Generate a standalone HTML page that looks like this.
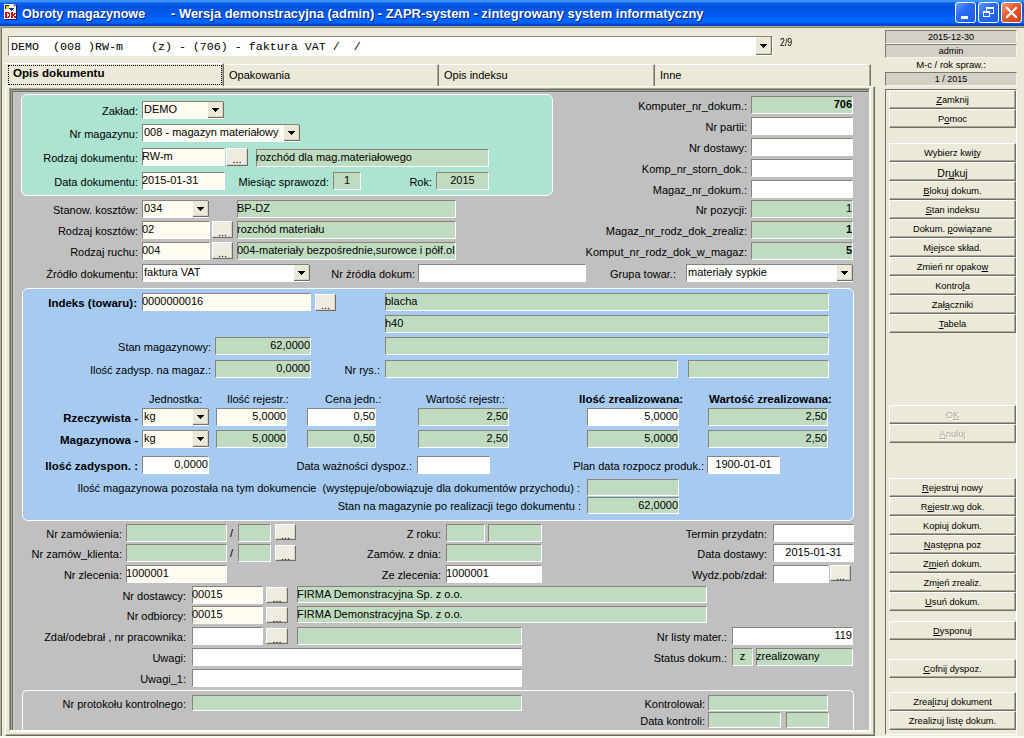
<!DOCTYPE html>
<html><head><meta charset="utf-8"><style>
html,body{margin:0;padding:0;width:1024px;height:738px;overflow:hidden;background:#ece9d8;position:relative;font-family:"Liberation Sans",sans-serif;font-size:11px;color:#000}
div,span,i{position:absolute;box-sizing:border-box}
#title{left:0;top:0;width:1024px;height:26px;background:linear-gradient(to bottom,#3d95ff 0px,#3a92fe 1.5px,#1a72f2 2.5px,#0a5ce8 3.5px,#0a5ce8 5px,#0052dc 6px,#0055e5 8px,#0057e8 13px,#0063fa 18px,#0066ff 21px,#0063fa 23px,#0046d2 24px,#0040c6 26px)}
.ttext{top:6px;height:16px;line-height:16px;color:#fff;font-weight:bold;font-size:13px;white-space:pre;text-shadow:1px 1px 0 #0a1f80}
#ticon{left:4px;top:4px;width:13px;height:16px}
#ticon .doc{left:0;top:0;width:12px;height:15px;background:#fff;box-shadow:1px 1px 0 #00207a}
#ticon .dk{left:0;top:5px;width:13px;height:10px;font-size:9px;line-height:10px;font-weight:bold;color:#d01010;text-align:center}
#ticon .ic1{left:1px;top:1px;width:4px;height:4px;background:#e8d020;border-left:1px solid #333;border-top:1px solid #333}
#ticon .ic2{left:5px;top:3px;width:4px;height:3px;background:#1040c0}
.tbtn{top:2px;width:21px;height:21px;border:1px solid #fff;border-radius:3px;background:linear-gradient(135deg,#6a9dff 0%,#2a6cf6 40%,#1d5be6 100%)}
.tbtn.cl{background:linear-gradient(135deg,#f59a7a 0%,#e5582e 45%,#d43d12 100%)}
.tbtn .mn{left:5px;top:13px;width:7px;height:3px;background:#fff}
.tbtn .rs1{left:7px;top:4px;width:8px;height:7px;border:1px solid #fff;border-top-width:2px}
.tbtn .rs2{left:4px;top:8px;width:7px;height:6px;border:1px solid #fff;border-top-width:2px;background:#2a6cf6}
.tbtn svg{position:absolute;left:-1px;top:-1px}
#wframe{left:0;top:26px;width:1024px;height:712px;border-top:1px solid #b4a98c;border-left:1px solid #b4b09c;box-shadow:inset 0 1px 0 #8a8676,inset 1px 0 0 #6e6c5c,inset 2px 0 0 #f2eee0}
.f{border-style:solid;border-width:1px;border-color:#8c8378 #fff #fff #8c8378;white-space:pre}
.ft{left:-1px;right:-1px;top:-1px;height:16px;line-height:16px;overflow:hidden}
.mono{left:2px;top:1px;height:19px;line-height:19px;font-family:"Liberation Mono",monospace;font-size:11.67px;white-space:pre}
.b{background:#efebe1;border-style:solid;border-width:1px;border-color:#fff #716f64 #716f64 #fff;box-shadow:inset -1px -1px 0 #d6d2c4;text-align:center}
.bt{left:0;right:0;top:3px;bottom:0;line-height:15px;white-space:pre}
.ar{left:50%;top:50%;margin-left:-4px;margin-top:-2px;width:0;height:0;border-left:4px solid transparent;border-right:4px solid transparent;border-top:4px solid #000}
.rb{background:#ece9d8;border-style:solid;border-width:1px;border-color:#fff #716f64 #716f64 #fff;box-shadow:inset -1px -1px 0 #aca899;text-align:center}
.rb .bt{line-height:17px;font-size:9.3px;top:1px}
.rb.dis{color:#aca899;text-shadow:1px 1px 0 #fff}
.l{text-align:right;white-space:pre}
.t{white-space:pre}
.p{border:1px solid #fff}
.sk{background:#d4d0c8;border-style:solid;border-width:1px;border-color:#7d7a6c #f6f4ea #f6f4ea #7d7a6c;text-align:center;line-height:12px}
#tabs{left:0;top:62px;width:880px;height:26px}
.tab{top:64px;height:23px;border-top:1px solid #fff;border-right:1px solid #716f64;box-shadow:inset -1px 0 0 #aca899;line-height:20px;padding-left:5px;white-space:pre}
.tab.act{top:63px;height:24px;font-size:11.6px;padding-left:8px;line-height:17px}
.tab .focus{left:3px;top:1px;right:1px;bottom:2px;border:1px dotted #000}
.tab b{position:static}
#page{left:5px;top:86px;width:870px;height:650px;border-style:solid;border-width:1px 1px 1px 1px;border-color:#fdfdf4 #6e6a5e #6e6a5e #fdfdf4;box-shadow:inset -1px -1px 0 #a8a494}
#form{left:9px;top:88px;width:862px;height:644px;background:#c0c0c0;border-style:solid;border-width:1px 2px 2px 1px;border-color:#a8a898 #fdfef4 #fdfef4 #a8a898;box-shadow:inset 1px 1px 0 #6c6c5c,inset 2px 2px 0 #a8a898,inset 3px 3px 0 #6a6a62,inset 4px 4px 0 #c8c8c4}
#bpanel{left:885px;top:89px;width:132px;height:646px;border-style:solid;border-width:1px;border-color:#716f64 #fff #fff #716f64}
u{text-decoration:underline}
.cb{background:#ece9d8;border-right:1px solid #716f64;border-bottom:1px solid #716f64;box-shadow:inset -1px -1px 0 #d8d4c4}
.cb svg.arr{position:absolute;left:50%;top:50%;margin-left:-4px;margin-top:-2px}
.skt{left:0;right:0;top:0px;line-height:13px;font-size:9px;text-align:center}
.rb.big .bt{font-size:10.5px;top:1.5px}
#wbot{left:0;top:736px;width:1024px;height:2px;background:#fafaf2}

</style></head><body>
<div id="title"></div>
<svg width="16" height="20" viewBox="0 0 16 20" style="position:absolute;left:3px;top:3px" shape-rendering="crispEdges"><rect x="1" y="1" width="12" height="15" fill="#fff"/><rect x="13" y="2" width="1" height="15" fill="#10206a"/><rect x="2" y="16" width="12" height="1" fill="#10206a"/><rect x="10" y="1" width="3" height="1" fill="#6a8ad0"/><rect x="11" y="2" width="2" height="1" fill="#6a8ad0"/><rect x="12" y="3" width="1" height="1" fill="#6a8ad0"/><rect x="10" y="1" width="1" height="3" fill="#c8c8d0"/><rect x="10" y="3" width="3" height="1" fill="#c8c8d0"/><rect x="2" y="2" width="4" height="4" fill="#222"/><rect x="3" y="3" width="3" height="3" fill="#f0d020"/><rect x="6" y="5" width="5" height="1" fill="#1030c0"/><rect x="7" y="6" width="3" height="1" fill="#1030c0"/><rect x="8" y="7" width="1" height="1" fill="#1030c0"/><rect x="2" y="9" width="4" height="1" fill="#cc1010"/><rect x="2" y="10" width="2" height="5" fill="#cc1010"/><rect x="2" y="14" width="4" height="1" fill="#cc1010"/><rect x="5" y="10" width="2" height="1" fill="#cc1010"/><rect x="6" y="11" width="1" height="3" fill="#cc1010"/><rect x="5" y="13" width="1" height="1" fill="#cc1010"/><rect x="8" y="9" width="2" height="6" fill="#cc1010"/><rect x="11" y="10" width="2" height="1" fill="#cc1010"/><rect x="10" y="11" width="2" height="1" fill="#cc1010"/><rect x="10" y="12" width="1" height="1" fill="#cc1010"/><rect x="11" y="13" width="1" height="1" fill="#cc1010"/><rect x="11" y="14" width="2" height="1" fill="#cc1010"/><rect x="12" y="13" width="1" height="1" fill="#cc1010"/></svg>
<div class="ttext" style="left:22px;font-size:12.6px">Obroty magazynowe</div>
<div class="ttext" style="left:171px;font-size:12.95px">- Wersja demonstracyjna (admin) - ZAPR-system - zintegrowany system informatyczny</div>
<div class="tbtn" style="left:955px"><i class="mn"></i></div>
<div class="tbtn" style="left:978px"><i class="rs1"></i><i class="rs2"></i></div>
<div class="tbtn cl" style="left:1001px"><svg width="21" height="21" viewBox="0 0 21 21"><path d="M6 6 L15 15 M15 6 L6 15" stroke="#fff" stroke-width="2.2" stroke-linecap="square"/></svg></div>
<div id="wframe"></div>
<div class="f" style="left:8px;top:36px;width:765px;height:20px;background:#fff"><span class="mono">DEMO  (008 )RW-m    (z) - (706) - faktura VAT /  /</span></div>
<div class="cb" style="left:756px;top:37px;width:16px;height:18px"><svg class="arr" width="7" height="4" viewBox="0 0 7 4"><path d="M0 0h7v1h-1v1h-1v1h-1v1h-1v-1h-1v-1h-1v-1h-1z" fill="#000"/></svg></div>
<div class="t" style="left:780px;top:36px;height:14px;line-height:14px;font-size:10px;transform:scaleX(.88);transform-origin:0 0">2/9</div>
<div id="tabs"></div>
<div class="tab act" style="left:5px;width:219px"><span class="focus"></span><b>Opis dokumentu</b></div>
<div class="tab" style="left:224px;width:215px">Opakowania</div>
<div class="tab" style="left:439px;width:216px">Opis indeksu</div>
<div class="tab" style="left:655px;width:216px">Inne</div>
<div id="page"></div>
<div id="form"></div>
<div class="p" style="left:21px;top:94px;width:532px;height:102px;background:#ace3d1;border-radius:6px"></div>
<div class="l" style="left:-562px;top:102px;width:700px;height:18px;line-height:18px;">Zakład:</div>
<div class="f" style="left:142px;top:101px;width:82px;height:18px;background:#fffbf0;"><span class="ft" style="text-align:left;left:1px;right:-1px;top:-1px">DEMO</span></div>
<div class="cb" style="left:208px;top:102px;width:16px;height:16px"><svg class="arr" width="7" height="4" viewBox="0 0 7 4"><path d="M0 0h7v1h-1v1h-1v1h-1v1h-1v-1h-1v-1h-1v-1h-1z" fill="#000"/></svg></div>
<div class="l" style="left:-562px;top:125px;width:700px;height:18px;line-height:18px;">Nr magazynu:</div>
<div class="f" style="left:142px;top:124px;width:158px;height:18px;background:#fffbf0;"><span class="ft" style="text-align:left;left:1px;right:-1px;top:-1px">008 - magazyn materiałowy</span></div>
<div class="cb" style="left:284px;top:125px;width:16px;height:16px"><svg class="arr" width="7" height="4" viewBox="0 0 7 4"><path d="M0 0h7v1h-1v1h-1v1h-1v1h-1v-1h-1v-1h-1v-1h-1z" fill="#000"/></svg></div>
<div class="l" style="left:-562px;top:149px;width:700px;height:18px;line-height:18px;">Rodzaj dokumentu:</div>
<div class="f" style="left:142px;top:148px;width:83px;height:18px;background:#fffbf0;"><span class="ft" style="text-align:left;left:-1px;right:-1px;top:-1px">RW-m</span></div>
<div class="b" style="left:226px;top:148px;width:22px;height:18px;"><span class="bt">...</span></div>
<div class="f" style="left:256px;top:149px;width:233px;height:18px;background:#c0dcc0;"><span class="ft" style="text-align:left;left:-1px;right:-1px;top:-1px">rozchód dla mag.materiałowego</span></div>
<div class="l" style="left:-562px;top:173px;width:700px;height:18px;line-height:18px;">Data dokumentu:</div>
<div class="f" style="left:142px;top:172px;width:83px;height:18px;background:#fffbf0;"><span class="ft" style="text-align:left;left:-1px;right:-1px;top:-1px">2015-01-31</span></div>
<div class="l" style="left:-371px;top:173px;width:700px;height:18px;line-height:18px;">Miesiąc sprawozd:</div>
<div class="f" style="left:333px;top:172px;width:28px;height:18px;background:#c0dcc0;"><span class="ft" style="text-align:center;left:0;right:0;top:-1px">1</span></div>
<div class="l" style="left:-268px;top:173px;width:700px;height:18px;line-height:18px;">Rok:</div>
<div class="f" style="left:436px;top:172px;width:53px;height:18px;background:#c0dcc0;"><span class="ft" style="text-align:center;left:0;right:0;top:-1px">2015</span></div>
<div class="l" style="left:47px;top:97px;width:700px;height:18px;line-height:18px;">Komputer_nr_dokum.:</div>
<div class="f" style="left:751px;top:96px;width:102px;height:18px;background:#c0dcc0;"><span class="ft" style="text-align:right;font-weight:bold;right:0px;left:-1px;top:-1px">706</span></div>
<div class="l" style="left:47px;top:118px;width:700px;height:18px;line-height:18px;">Nr partii:</div>
<div class="f" style="left:751px;top:117px;width:102px;height:18px;background:#ffffff;"><span class="ft" style="text-align:right;right:0px;left:-1px;top:-1px"></span></div>
<div class="l" style="left:47px;top:139px;width:700px;height:18px;line-height:18px;">Nr dostawy:</div>
<div class="f" style="left:751px;top:138px;width:102px;height:18px;background:#ffffff;"><span class="ft" style="text-align:right;right:0px;left:-1px;top:-1px"></span></div>
<div class="l" style="left:47px;top:160px;width:700px;height:18px;line-height:18px;">Komp_nr_storn_dok.:</div>
<div class="f" style="left:751px;top:159px;width:102px;height:18px;background:#ffffff;"><span class="ft" style="text-align:right;right:0px;left:-1px;top:-1px"></span></div>
<div class="l" style="left:47px;top:181px;width:700px;height:18px;line-height:18px;">Magaz_nr_dokum.:</div>
<div class="f" style="left:751px;top:180px;width:102px;height:18px;background:#ffffff;"><span class="ft" style="text-align:right;right:0px;left:-1px;top:-1px"></span></div>
<div class="l" style="left:47px;top:201px;width:700px;height:18px;line-height:18px;">Nr pozycji:</div>
<div class="f" style="left:751px;top:200px;width:102px;height:18px;background:#c0dcc0;"><span class="ft" style="text-align:right;right:0px;left:-1px;top:-1px">1</span></div>
<div class="l" style="left:47px;top:222px;width:700px;height:18px;line-height:18px;">Magaz_nr_rodz_dok_zrealiz:</div>
<div class="f" style="left:751px;top:221px;width:102px;height:18px;background:#c0dcc0;"><span class="ft" style="text-align:right;font-weight:bold;right:0px;left:-1px;top:-1px">1</span></div>
<div class="l" style="left:47px;top:243px;width:700px;height:18px;line-height:18px;">Komput_nr_rodz_dok_w_magaz:</div>
<div class="f" style="left:751px;top:242px;width:102px;height:18px;background:#c0dcc0;"><span class="ft" style="text-align:right;font-weight:bold;right:0px;left:-1px;top:-1px">5</span></div>
<div class="l" style="left:-562px;top:201px;width:700px;height:18px;line-height:18px;">Stanow. kosztów:</div>
<div class="f" style="left:142px;top:200px;width:67px;height:18px;background:#fffbf0;"><span class="ft" style="text-align:left;left:1px;right:-1px;top:-1px">034</span></div>
<div class="cb" style="left:193px;top:201px;width:16px;height:16px"><svg class="arr" width="7" height="4" viewBox="0 0 7 4"><path d="M0 0h7v1h-1v1h-1v1h-1v1h-1v-1h-1v-1h-1v-1h-1z" fill="#000"/></svg></div>
<div class="f" style="left:237px;top:200px;width:219px;height:18px;background:#c0dcc0;"><span class="ft" style="text-align:left;left:-1px;right:-1px;top:-1px">BP-DZ</span></div>
<div class="l" style="left:-562px;top:222px;width:700px;height:18px;line-height:18px;">Rodzaj kosztów:</div>
<div class="f" style="left:142px;top:221px;width:68px;height:18px;background:#fffbf0;"><span class="ft" style="text-align:left;left:-1px;right:-1px;top:-1px">02</span></div>
<div class="b" style="left:212px;top:221px;width:21px;height:17px;"><span class="bt">...</span></div>
<div class="f" style="left:237px;top:221px;width:219px;height:18px;background:#c0dcc0;"><span class="ft" style="text-align:left;left:-1px;right:-1px;top:-1px">rozchód materiału</span></div>
<div class="l" style="left:-562px;top:243px;width:700px;height:18px;line-height:18px;">Rodzaj ruchu:</div>
<div class="f" style="left:142px;top:242px;width:68px;height:18px;background:#fffbf0;"><span class="ft" style="text-align:left;left:-1px;right:-1px;top:-1px">004</span></div>
<div class="b" style="left:212px;top:242px;width:21px;height:17px;"><span class="bt">...</span></div>
<div class="f" style="left:237px;top:242px;width:219px;height:18px;background:#c0dcc0;"><span class="ft" style="text-align:left;left:-1px;right:-1px;top:-1px">004-materiały bezpośrednie,surowce i półf.ol</span></div>
<div class="l" style="left:-562px;top:265px;width:700px;height:18px;line-height:18px;">Źródło dokumentu:</div>
<div class="f" style="left:142px;top:264px;width:168px;height:18px;background:#ffffff;"><span class="ft" style="text-align:left;left:1px;right:-1px;top:-1px">faktura VAT</span></div>
<div class="cb" style="left:294px;top:265px;width:16px;height:16px"><svg class="arr" width="7" height="4" viewBox="0 0 7 4"><path d="M0 0h7v1h-1v1h-1v1h-1v1h-1v-1h-1v-1h-1v-1h-1z" fill="#000"/></svg></div>
<div class="l" style="left:-285px;top:265px;width:700px;height:18px;line-height:18px;">Nr źródła dokum:</div>
<div class="f" style="left:418px;top:264px;width:168px;height:18px;background:#ffffff;"><span class="ft" style="text-align:left;left:-1px;right:-1px;top:-1px"></span></div>
<div class="l" style="left:-24px;top:265px;width:700px;height:18px;line-height:18px;">Grupa towar.:</div>
<div class="f" style="left:686px;top:264px;width:167px;height:18px;background:#ffffff;"><span class="ft" style="text-align:left;left:1px;right:-1px;top:-1px">materiały sypkie</span></div>
<div class="cb" style="left:837px;top:265px;width:16px;height:16px"><svg class="arr" width="7" height="4" viewBox="0 0 7 4"><path d="M0 0h7v1h-1v1h-1v1h-1v1h-1v-1h-1v-1h-1v-1h-1z" fill="#000"/></svg></div>
<div class="p" style="left:22px;top:288px;width:832px;height:233px;background:#a6caf0;border-radius:6px"></div>
<div class="l" style="left:-563px;top:294px;width:700px;height:18px;line-height:18px;font-weight:bold;font-size:11.5px;">Indeks (towaru):</div>
<div class="f" style="left:142px;top:293px;width:169px;height:18px;background:#fffbf0;"><span class="ft" style="text-align:left;left:-1px;right:-1px;top:-1px">0000000016</span></div>
<div class="b" style="left:315px;top:294px;width:21px;height:17px;"><span class="bt">...</span></div>
<div class="f" style="left:385px;top:293px;width:444px;height:18px;background:#c0dcc0;"><span class="ft" style="text-align:left;left:-1px;right:-1px;top:-1px">blacha</span></div>
<div class="f" style="left:385px;top:315px;width:444px;height:18px;background:#c0dcc0;"><span class="ft" style="text-align:left;left:-1px;right:-1px;top:-1px">h40</span></div>
<div class="l" style="left:-489px;top:338px;width:700px;height:18px;line-height:18px;">Stan magazynowy:</div>
<div class="f" style="left:215px;top:337px;width:96px;height:18px;background:#c0dcc0;"><span class="ft" style="text-align:right;right:0px;left:-1px;top:-1px">62,0000</span></div>
<div class="f" style="left:385px;top:337px;width:444px;height:18px;background:#c0dcc0;"><span class="ft" style="text-align:left;left:-1px;right:-1px;top:-1px"></span></div>
<div class="l" style="left:-489px;top:361px;width:700px;height:18px;line-height:18px;">Ilość zadysp. na magaz.:</div>
<div class="f" style="left:215px;top:360px;width:96px;height:18px;background:#c0dcc0;"><span class="ft" style="text-align:right;right:0px;left:-1px;top:-1px">0,0000</span></div>
<div class="l" style="left:-320px;top:361px;width:700px;height:18px;line-height:18px;">Nr rys.:</div>
<div class="f" style="left:385px;top:360px;width:293px;height:18px;background:#c0dcc0;"><span class="ft" style="text-align:left;left:-1px;right:-1px;top:-1px"></span></div>
<div class="f" style="left:688px;top:360px;width:141px;height:18px;background:#c0dcc0;"><span class="ft" style="text-align:left;left:-1px;right:-1px;top:-1px"></span></div>
<div class="t" style="left:149px;top:390px;height:18px;line-height:18px;text-align:left;">Jednostka:</div>
<div class="t" style="left:227px;top:390px;height:18px;line-height:18px;text-align:left;">Ilość rejestr.:</div>
<div class="t" style="left:325px;top:390px;height:18px;line-height:18px;text-align:left;">Cena jedn.:</div>
<div class="t" style="left:426px;top:390px;height:18px;line-height:18px;text-align:left;">Wartość rejestr.:</div>
<div class="t" style="left:579px;top:390px;height:18px;line-height:18px;text-align:left;font-weight:bold;font-size:11.5px;">Ilość zrealizowana:</div>
<div class="t" style="left:709px;top:390px;height:18px;line-height:18px;text-align:left;font-weight:bold;font-size:11.5px;">Wartość zrealizowana:</div>
<div class="l" style="left:-562px;top:409px;width:700px;height:18px;line-height:18px;font-weight:bold;font-size:11.5px;">Rzeczywista -</div>
<div class="f" style="left:142px;top:408px;width:67px;height:18px;background:#fffbf0;"><span class="ft" style="text-align:left;left:1px;right:-1px;top:-1px">kg</span></div>
<div class="cb" style="left:193px;top:409px;width:16px;height:16px"><svg class="arr" width="7" height="4" viewBox="0 0 7 4"><path d="M0 0h7v1h-1v1h-1v1h-1v1h-1v-1h-1v-1h-1v-1h-1z" fill="#000"/></svg></div>
<div class="f" style="left:216px;top:408px;width:71px;height:18px;background:#fffbf0;"><span class="ft" style="text-align:right;right:0px;left:-1px;top:-1px">5,0000</span></div>
<div class="f" style="left:307px;top:408px;width:69px;height:18px;background:#ffffff;"><span class="ft" style="text-align:right;right:0px;left:-1px;top:-1px">0,50</span></div>
<div class="f" style="left:418px;top:408px;width:91px;height:18px;background:#c0dcc0;"><span class="ft" style="text-align:right;right:0px;left:-1px;top:-1px">2,50</span></div>
<div class="f" style="left:587px;top:408px;width:92px;height:18px;background:#ffffff;"><span class="ft" style="text-align:right;right:0px;left:-1px;top:-1px">5,0000</span></div>
<div class="f" style="left:708px;top:408px;width:120px;height:18px;background:#c0dcc0;"><span class="ft" style="text-align:right;right:0px;left:-1px;top:-1px">2,50</span></div>
<div class="l" style="left:-562px;top:431px;width:700px;height:18px;line-height:18px;font-weight:bold;font-size:11.5px;">Magazynowa -</div>
<div class="f" style="left:142px;top:430px;width:67px;height:18px;background:#fffbf0;"><span class="ft" style="text-align:left;left:1px;right:-1px;top:-1px">kg</span></div>
<div class="cb" style="left:193px;top:431px;width:16px;height:16px"><svg class="arr" width="7" height="4" viewBox="0 0 7 4"><path d="M0 0h7v1h-1v1h-1v1h-1v1h-1v-1h-1v-1h-1v-1h-1z" fill="#000"/></svg></div>
<div class="f" style="left:216px;top:430px;width:71px;height:18px;background:#c0dcc0;"><span class="ft" style="text-align:right;right:0px;left:-1px;top:-1px">5,0000</span></div>
<div class="f" style="left:307px;top:430px;width:69px;height:18px;background:#c0dcc0;"><span class="ft" style="text-align:right;right:0px;left:-1px;top:-1px">0,50</span></div>
<div class="f" style="left:418px;top:430px;width:91px;height:18px;background:#c0dcc0;"><span class="ft" style="text-align:right;right:0px;left:-1px;top:-1px">2,50</span></div>
<div class="f" style="left:587px;top:430px;width:92px;height:18px;background:#c0dcc0;"><span class="ft" style="text-align:right;right:0px;left:-1px;top:-1px">5,0000</span></div>
<div class="f" style="left:708px;top:430px;width:120px;height:18px;background:#c0dcc0;"><span class="ft" style="text-align:right;right:0px;left:-1px;top:-1px">2,50</span></div>
<div class="l" style="left:-562px;top:457px;width:700px;height:18px;line-height:18px;font-weight:bold;font-size:11.5px;">Ilość zadyspon. :</div>
<div class="f" style="left:142px;top:456px;width:67px;height:18px;background:#ffffff;"><span class="ft" style="text-align:right;right:0px;left:-1px;top:-1px">0,0000</span></div>
<div class="l" style="left:-288px;top:457px;width:700px;height:18px;line-height:18px;">Data ważności dyspoz.:</div>
<div class="f" style="left:417px;top:456px;width:73px;height:18px;background:#ffffff;"><span class="ft" style="text-align:left;left:-1px;right:-1px;top:-1px"></span></div>
<div class="l" style="left:4px;top:457px;width:700px;height:18px;line-height:18px;">Plan data rozpocz produk.:</div>
<div class="f" style="left:707px;top:456px;width:73px;height:18px;background:#ffffff;"><span class="ft" style="text-align:center;left:0;right:0;top:-1px">1900-01-01</span></div>
<div class="l" style="left:-120px;top:480px;width:700px;height:17px;line-height:17px;">Ilość magazynowa pozostała na tym dokumencie  (występuje/obowiązuje dla dokumentów przychodu) :</div>
<div class="f" style="left:587px;top:479px;width:92px;height:17px;background:#c0dcc0;"><span class="ft" style="text-align:left;left:-1px;right:-1px;top:-1px"></span></div>
<div class="l" style="left:-119px;top:498px;width:700px;height:17px;line-height:17px;">Stan na magazynie po realizacji tego dokumentu :</div>
<div class="f" style="left:587px;top:497px;width:92px;height:17px;background:#c0dcc0;"><span class="ft" style="text-align:right;right:0px;left:-1px;top:-1px">62,0000</span></div>
<div class="l" style="left:-578px;top:525px;width:700px;height:18px;line-height:18px;">Nr zamówienia:</div>
<div class="f" style="left:126px;top:524px;width:101px;height:18px;background:#c0dcc0;"><span class="ft" style="text-align:left;left:-1px;right:-1px;top:-1px"></span></div>
<div class="t" style="left:230px;top:524px;height:18px;line-height:18px;text-align:left;">/</div>
<div class="f" style="left:238px;top:524px;width:33px;height:18px;background:#c0dcc0;"><span class="ft" style="text-align:left;left:-1px;right:-1px;top:-1px"></span></div>
<div class="b" style="left:275px;top:524px;width:21px;height:16px;"><span class="bt">...</span></div>
<div class="l" style="left:-578px;top:545px;width:700px;height:18px;line-height:18px;">Nr zamów_klienta:</div>
<div class="f" style="left:126px;top:544px;width:101px;height:18px;background:#c0dcc0;"><span class="ft" style="text-align:left;left:-1px;right:-1px;top:-1px"></span></div>
<div class="t" style="left:230px;top:544px;height:18px;line-height:18px;text-align:left;">/</div>
<div class="f" style="left:238px;top:544px;width:33px;height:18px;background:#c0dcc0;"><span class="ft" style="text-align:left;left:-1px;right:-1px;top:-1px"></span></div>
<div class="b" style="left:275px;top:545px;width:21px;height:16px;"><span class="bt">...</span></div>
<div class="l" style="left:-578px;top:566px;width:700px;height:18px;line-height:18px;">Nr zlecenia:</div>
<div class="f" style="left:126px;top:565px;width:101px;height:18px;background:#fffbf0;"><span class="ft" style="text-align:left;left:-1px;right:-1px;top:-1px">1000001</span></div>
<div class="l" style="left:-259px;top:525px;width:700px;height:18px;line-height:18px;">Z roku:</div>
<div class="f" style="left:446px;top:524px;width:39px;height:18px;background:#c0dcc0;"><span class="ft" style="text-align:left;left:-1px;right:-1px;top:-1px"></span></div>
<div class="f" style="left:488px;top:524px;width:54px;height:18px;background:#c0dcc0;"><span class="ft" style="text-align:left;left:-1px;right:-1px;top:-1px"></span></div>
<div class="l" style="left:-259px;top:545px;width:700px;height:18px;line-height:18px;">Zamów. z dnia:</div>
<div class="f" style="left:446px;top:544px;width:96px;height:18px;background:#c0dcc0;"><span class="ft" style="text-align:left;left:-1px;right:-1px;top:-1px"></span></div>
<div class="l" style="left:-259px;top:566px;width:700px;height:18px;line-height:18px;">Ze zlecenia:</div>
<div class="f" style="left:446px;top:565px;width:96px;height:18px;background:#ffffff;"><span class="ft" style="text-align:left;left:-1px;right:-1px;top:-1px">1000001</span></div>
<div class="l" style="left:67px;top:525px;width:700px;height:18px;line-height:18px;">Termin przydatn:</div>
<div class="f" style="left:773px;top:524px;width:81px;height:18px;background:#ffffff;"><span class="ft" style="text-align:left;left:-1px;right:-1px;top:-1px"></span></div>
<div class="l" style="left:67px;top:545px;width:700px;height:18px;line-height:18px;">Data dostawy:</div>
<div class="f" style="left:773px;top:544px;width:81px;height:18px;background:#ffffff;"><span class="ft" style="text-align:center;left:0;right:0;top:-1px">2015-01-31</span></div>
<div class="l" style="left:67px;top:566px;width:700px;height:18px;line-height:18px;">Wydz.pob/zdał:</div>
<div class="f" style="left:773px;top:565px;width:56px;height:18px;background:#ffffff;"><span class="ft" style="text-align:left;left:-1px;right:-1px;top:-1px"></span></div>
<div class="b" style="left:830px;top:565px;width:21px;height:16px;"><span class="bt">...</span></div>
<div class="l" style="left:-514px;top:587px;width:700px;height:18px;line-height:18px;">Nr dostawcy:</div>
<div class="f" style="left:192px;top:586px;width:71px;height:18px;background:#fffbf0;"><span class="ft" style="text-align:left;left:-1px;right:-1px;top:-1px">00015</span></div>
<div class="b" style="left:266px;top:587px;width:22px;height:16px;"><span class="bt">...</span></div>
<div class="f" style="left:297px;top:586px;width:410px;height:17px;background:#c0dcc0;"><span class="ft" style="text-align:left;left:-1px;right:-1px;top:-1px">FIRMA Demonstracyjna Sp. z o.o.</span></div>
<div class="l" style="left:-514px;top:607px;width:700px;height:18px;line-height:18px;">Nr odbiorcy:</div>
<div class="f" style="left:192px;top:606px;width:71px;height:18px;background:#fffbf0;"><span class="ft" style="text-align:left;left:-1px;right:-1px;top:-1px">00015</span></div>
<div class="b" style="left:266px;top:607px;width:22px;height:16px;"><span class="bt">...</span></div>
<div class="f" style="left:297px;top:606px;width:410px;height:17px;background:#c0dcc0;"><span class="ft" style="text-align:left;left:-1px;right:-1px;top:-1px">FIRMA Demonstracyjna Sp. z o.o.</span></div>
<div class="l" style="left:-514px;top:628px;width:700px;height:18px;line-height:18px;">Zdał/odebrał , nr pracownika:</div>
<div class="f" style="left:192px;top:627px;width:71px;height:18px;background:#ffffff;"><span class="ft" style="text-align:left;left:-1px;right:-1px;top:-1px"></span></div>
<div class="b" style="left:266px;top:628px;width:22px;height:16px;"><span class="bt">...</span></div>
<div class="f" style="left:297px;top:627px;width:225px;height:18px;background:#c0dcc0;"><span class="ft" style="text-align:left;left:-1px;right:-1px;top:-1px"></span></div>
<div class="l" style="left:-514px;top:649px;width:700px;height:18px;line-height:18px;">Uwagi:</div>
<div class="f" style="left:192px;top:648px;width:330px;height:18px;background:#ffffff;"><span class="ft" style="text-align:left;left:-1px;right:-1px;top:-1px"></span></div>
<div class="l" style="left:-514px;top:670px;width:700px;height:18px;line-height:18px;">Uwagi_1:</div>
<div class="f" style="left:192px;top:669px;width:330px;height:18px;background:#ffffff;"><span class="ft" style="text-align:left;left:-1px;right:-1px;top:-1px"></span></div>
<div class="l" style="left:27px;top:628px;width:700px;height:18px;line-height:18px;">Nr listy mater.:</div>
<div class="f" style="left:732px;top:627px;width:121px;height:18px;background:#ffffff;"><span class="ft" style="text-align:right;right:0px;left:-1px;top:-1px">119</span></div>
<div class="l" style="left:27px;top:649px;width:700px;height:18px;line-height:18px;">Status dokum.:</div>
<div class="f" style="left:732px;top:648px;width:21px;height:18px;background:#c0dcc0;"><span class="ft" style="text-align:center;left:0;right:0;top:-1px">z</span></div>
<div class="f" style="left:756px;top:648px;width:97px;height:18px;background:#c0dcc0;"><span class="ft" style="text-align:left;left:-1px;right:-1px;top:-1px">zrealizowany</span></div>
<div class="p" style="left:22px;top:690px;width:832px;height:40px;background:transparent;border-radius:5px 5px 0 0;border-bottom:none"></div>
<div class="l" style="left:-514px;top:696px;width:700px;height:16px;line-height:16px;">Nr protokołu kontrolnego:</div>
<div class="f" style="left:192px;top:695px;width:330px;height:16px;background:#c0dcc0;"><span class="ft" style="text-align:left;left:-1px;right:-1px;top:-1px"></span></div>
<div class="l" style="left:5px;top:696px;width:700px;height:16px;line-height:16px;">Kontrolował:</div>
<div class="f" style="left:708px;top:695px;width:120px;height:16px;background:#c0dcc0;"><span class="ft" style="text-align:left;left:-1px;right:-1px;top:-1px"></span></div>
<div class="l" style="left:5px;top:713px;width:700px;height:16px;line-height:16px;">Data kontroli:</div>
<div class="f" style="left:708px;top:712px;width:73px;height:16px;background:#c0dcc0;"><span class="ft" style="text-align:left;left:-1px;right:-1px;top:-1px"></span></div>
<div class="f" style="left:786px;top:712px;width:43px;height:16px;background:#c0dcc0;"><span class="ft" style="text-align:left;left:-1px;right:-1px;top:-1px"></span></div>
<div class="sk" style="left:885px;top:30px;width:132px;height:14px"><span class="skt">2015-12-30</span></div>
<div class="sk" style="left:885px;top:44px;width:132px;height:14px"><span class="skt">admin</span></div>
<div class="t" style="left:885px;top:58px;width:132px;height:14px;line-height:14px;text-align:center;font-size:9.5px">M-c / rok spraw.:</div>
<div class="sk" style="left:885px;top:72px;width:132px;height:14px"><span class="skt">1 / 2015</span></div>
<div id="bpanel"></div>
<div class="rb" style="left:889px;top:90px;width:127px;height:19px;"><span class="bt"><u>Z</u>amknij</span></div>
<div class="rb" style="left:889px;top:109px;width:127px;height:19px;"><span class="bt">P<u>o</u>moc</span></div>
<div class="rb" style="left:889px;top:143px;width:127px;height:19px;"><span class="bt">Wybierz kwi<u>t</u>y</span></div>
<div class="rb big" style="left:889px;top:162px;width:127px;height:19px;"><span class="bt">Dr<u>u</u>kuj</span></div>
<div class="rb" style="left:889px;top:181px;width:127px;height:19px;"><span class="bt"><u>B</u>lokuj dokum.</span></div>
<div class="rb" style="left:889px;top:200px;width:127px;height:19px;"><span class="bt"><u>S</u>tan indeksu</span></div>
<div class="rb" style="left:889px;top:219px;width:127px;height:19px;"><span class="bt">Dokum. <u>p</u>owiązane</span></div>
<div class="rb" style="left:889px;top:238px;width:127px;height:19px;"><span class="bt">M<u>i</u>ejsce skład.</span></div>
<div class="rb" style="left:889px;top:257px;width:127px;height:19px;"><span class="bt">Zmień nr opako<u>w</u></span></div>
<div class="rb" style="left:889px;top:276px;width:127px;height:19px;"><span class="bt">Kontro<u>l</u>a</span></div>
<div class="rb" style="left:889px;top:295px;width:127px;height:19px;"><span class="bt">Zał<u>ą</u>czniki</span></div>
<div class="rb" style="left:889px;top:314px;width:127px;height:19px;"><span class="bt"><u>T</u>abela</span></div>
<div class="rb dis" style="left:889px;top:405px;width:127px;height:19px;"><span class="bt">O<u>K</u></span></div>
<div class="rb dis" style="left:889px;top:424px;width:127px;height:19px;"><span class="bt"><u>A</u>nuluj</span></div>
<div class="rb" style="left:889px;top:478px;width:127px;height:19px;"><span class="bt"><u>R</u>ejestruj nowy</span></div>
<div class="rb" style="left:889px;top:497px;width:127px;height:19px;"><span class="bt">R<u>e</u>jestr.wg dok.</span></div>
<div class="rb" style="left:889px;top:516px;width:127px;height:19px;"><span class="bt">Kopiuj dokum.</span></div>
<div class="rb" style="left:889px;top:535px;width:127px;height:19px;"><span class="bt"><u>N</u>astępna poz</span></div>
<div class="rb" style="left:889px;top:554px;width:127px;height:19px;"><span class="bt">Z<u>m</u>ień dokum.</span></div>
<div class="rb" style="left:889px;top:573px;width:127px;height:19px;"><span class="bt">Zm<u>i</u>eń zrealiz.</span></div>
<div class="rb" style="left:889px;top:592px;width:127px;height:19px;"><span class="bt"><u>U</u>suń dokum.</span></div>
<div class="rb" style="left:889px;top:621px;width:127px;height:19px;"><span class="bt"><u>D</u>ysponuj</span></div>
<div class="rb" style="left:889px;top:659px;width:127px;height:19px;"><span class="bt"><u>C</u>ofnij dyspoz.</span></div>
<div class="rb" style="left:889px;top:692px;width:127px;height:19px;"><span class="bt">Zrea<u>l</u>izuj dokument</span></div>
<div class="rb" style="left:889px;top:711px;width:127px;height:19px;"><span class="bt">Zrealizu<u>j</u> listę dokum.</span></div>
<div id="wbot"></div>
</body></html>
